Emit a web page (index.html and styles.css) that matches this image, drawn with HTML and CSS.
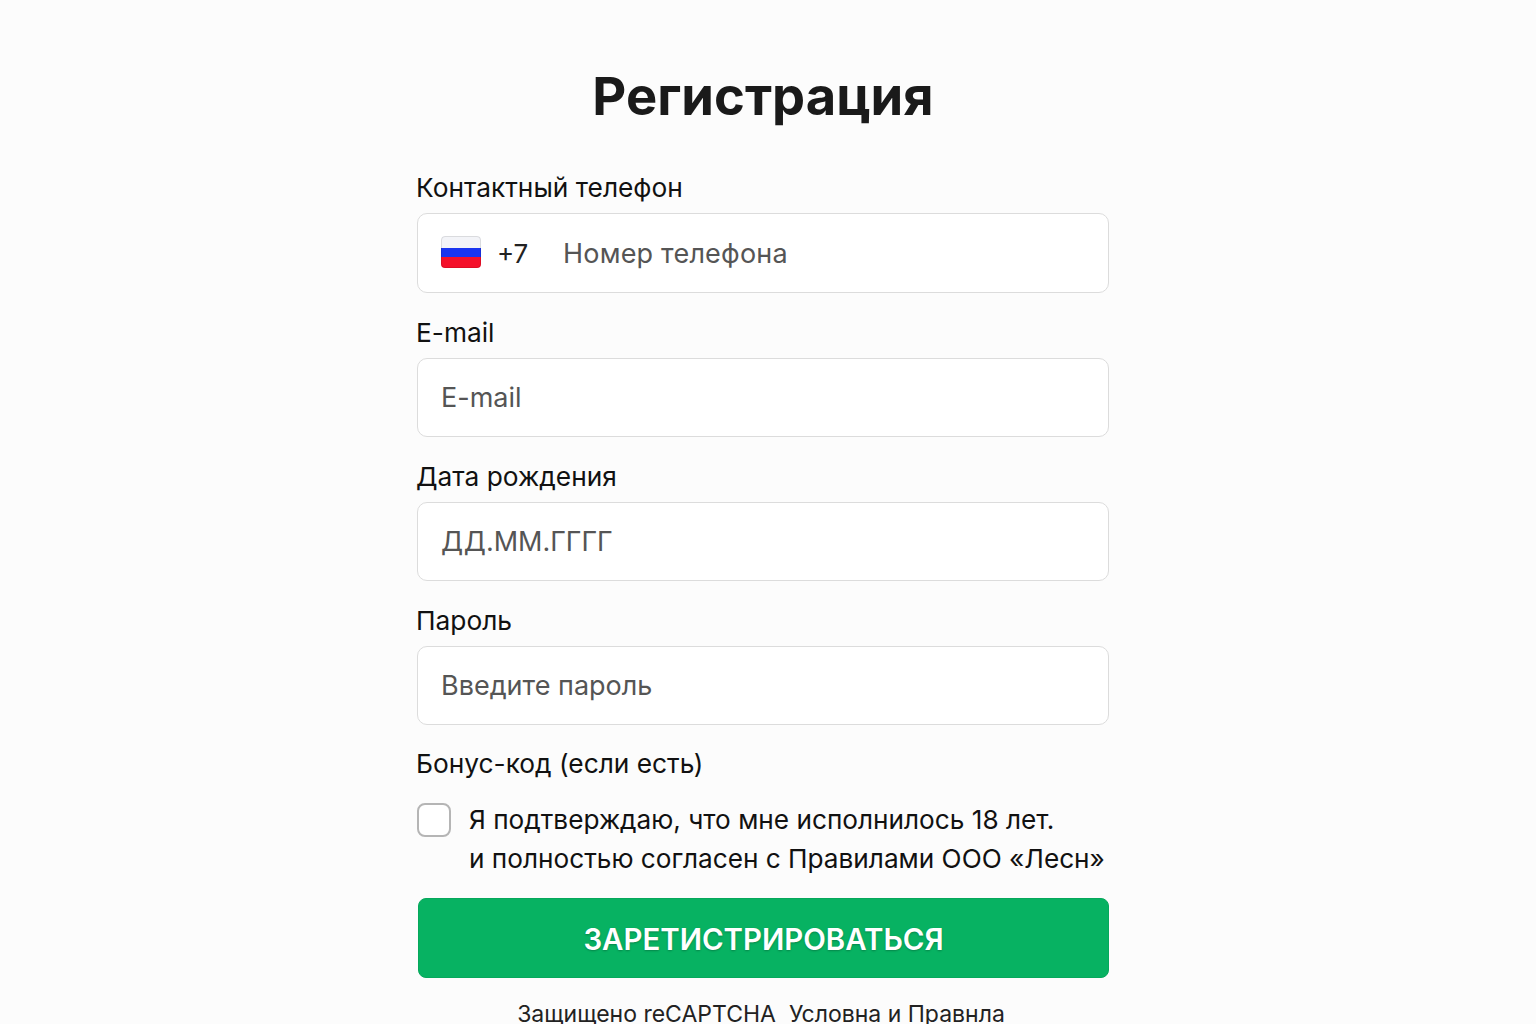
FILE: index.html
```html
<!DOCTYPE html>
<html lang="ru">
<head>
    <meta charset="UTF-8">
    <title>Регистрация</title>
    <link rel="stylesheet" href="styles.css">
</head>
<body>
    <main class="form">
        <h1>Регистрация</h1>

        <label class="label label-first">Контактный телефон</label>
        <div class="field field-phone">
            <svg class="flag" width="40" height="32" viewBox="0 0 40 32">
                <defs><clipPath id="flag-clip"><rect width="40" height="32" rx="4"/></clipPath></defs>
                <g clip-path="url(#flag-clip)">
                    <rect width="40" height="12" fill="#f3f4f8"/>
                    <rect y="12" width="40" height="9" fill="#1a35f0"/>
                    <rect y="21" width="40" height="11" fill="#f5102a"/>
                </g>
                <rect x="0.5" y="0.5" width="39" height="31" rx="3.5" fill="none" stroke="#000" stroke-opacity="0.1"/>
            </svg>
            <span class="code">+7</span>
            <span class="placeholder placeholder-phone">Номер телефона</span>
        </div>

        <label class="label">E-mail</label>
        <div class="field"><span class="placeholder">E-mail</span></div>

        <label class="label">Дата рождения</label>
        <div class="field"><span class="placeholder">ДД.ММ.ГГГГ</span></div>

        <label class="label">Пароль</label>
        <div class="field"><span class="placeholder">Введите пароль</span></div>

        <label class="label label-bonus">Бонус-код (если есть)</label>

        <div class="agree">
            <span class="checkbox"></span>
            <p>Я подтверждаю, что мне исполнилось 18 лет.<br>и полностью согласен с Правилами ООО «Лесн»</p>
        </div>

        <button class="submit">ЗАРЕТИСТРИРОВАТЬСЯ</button>

        <p class="note">Защищено reCAPTCHA&nbsp; Условна и Правнла</p>
    </main>
</body>
</html>
```

FILE: styles.css
```css
html, body {
    height: 100%;
}
body {
    margin: 0;
    background: #fcfcfc;
    color: #1a1a1a;
    font-family: Inter, "Noto Sans", sans-serif;
    overflow: hidden;
}
.form {
    width: 692px;
    margin-left: 417px;
    padding-top: 62px;
}
h1 {
    margin: 0;
    font-size: 52.5px;
    line-height: 68px;
    font-weight: 700;
    text-align: center;
}
.label {
    display: block;
    margin: 25px 0 10px -1px;
    font-size: 26.3px;
    line-height: 30px;
    color: #111;
}
.label-first {
    margin-top: 43px;
}
.field {
    display: flex;
    align-items: center;
    box-sizing: border-box;
    height: 79px;
    padding: 0 23px;
    background: #fff;
    border: 1px solid #dcdcdc;
    border-radius: 10px;
}
.field-phone {
    height: 80px;
}
.flag {
    margin: -2px 16px 0 0;
}
.code {
    width: 66px;
    font-size: 26px;
    color: #222;
}
.placeholder {
    font-size: 27px;
    color: #555;
}
.placeholder-phone {
    letter-spacing: 0.2px;
}
.label-bonus {
    margin-top: 24px;
    margin-bottom: 0;
}
.agree {
    display: flex;
    gap: 18px;
    margin-top: 21px;
}
.checkbox {
    flex: none;
    box-sizing: border-box;
    width: 34px;
    height: 34px;
    margin-top: 3px;
    background: #fff;
    border: 2px solid #b5b5b5;
    border-radius: 8px;
}
.agree p {
    margin: 0;
    font-size: 26.2px;
    line-height: 39px;
    white-space: nowrap;
    color: #111;
}
.submit {
    display: block;
    width: 691px;
    height: 80px;
    margin: 20px 0 0 1px;
    padding-top: 3px;
    background: #07b262;
    border: 1px solid #06a85c;
    border-radius: 8px;
    color: #fff;
    font-family: inherit;
    font-size: 29.4px;
    font-weight: 600;
    text-shadow: 0 1px 2px rgba(0, 0, 0, 0.25);
}
.note {
    margin: 21px 0 0;
    padding-right: 4px;
    font-size: 23px;
    line-height: 30px;
    text-align: center;
    color: #222;
}
```
